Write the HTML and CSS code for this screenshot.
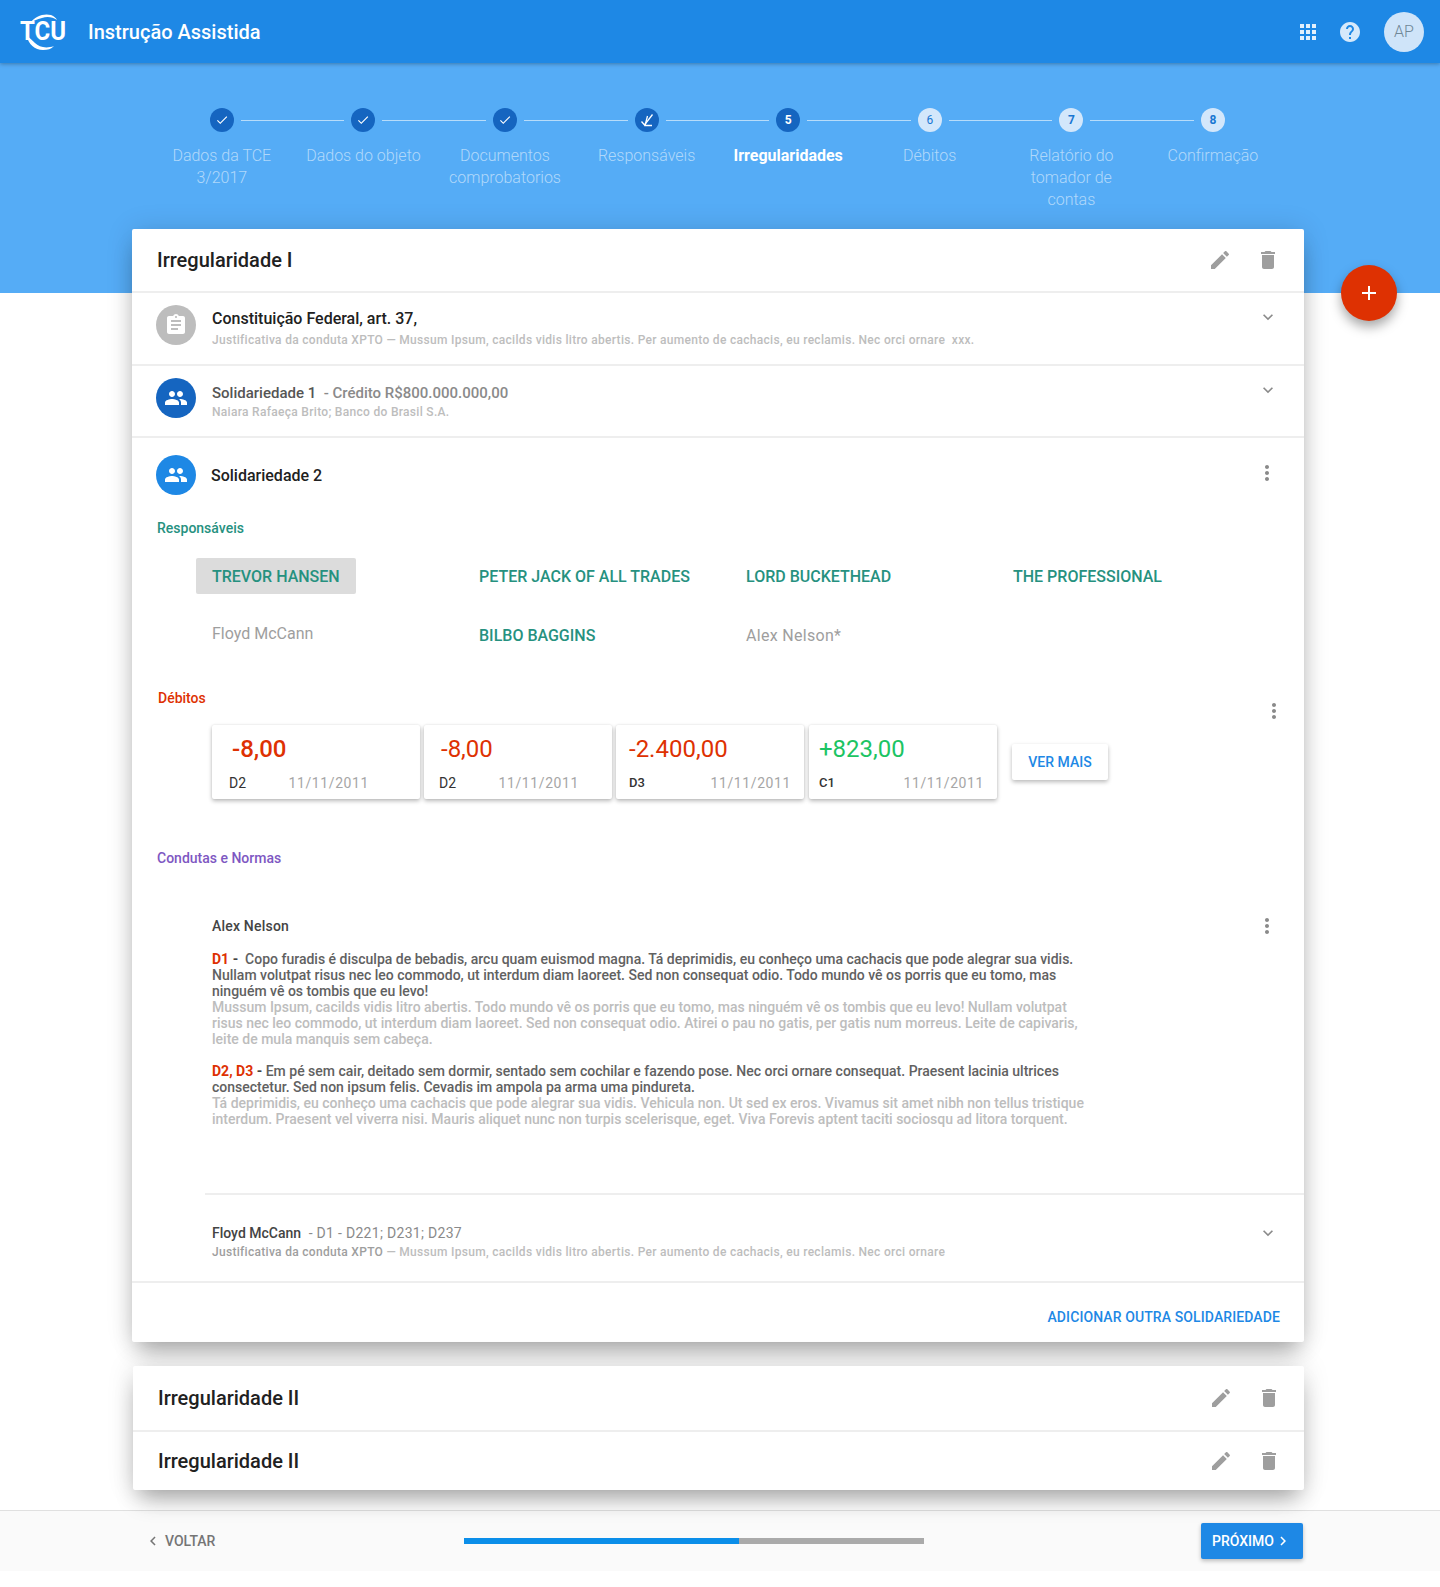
FILE: index.html
```html
<!DOCTYPE html>
<html lang="pt-BR">
<head>
<meta charset="utf-8">
<title>Instrução Assistida</title>
<link rel="stylesheet" href="styles.css">
</head>
<body>
<svg class="defs" width="0" height="0" aria-hidden="true">
  <symbol id="i-edit" viewBox="0 0 24 24"><path d="M3 17.25V21h3.75L17.81 9.94l-3.75-3.75L3 17.25zM20.71 7.04c.39-.39.39-1.02 0-1.41l-2.34-2.34c-.39-.39-1.02-.39-1.41 0l-1.83 1.83 3.75 3.75 1.83-1.83z"/></symbol>
  <symbol id="i-del" viewBox="0 0 24 24"><path d="M6 19c0 1.1.9 2 2 2h8c1.1 0 2-.9 2-2V7H6v12zM19 4h-3.5l-1-1h-5l-1 1H5v2h14V4z"/></symbol>
  <symbol id="i-down" viewBox="0 0 24 24"><path d="M16.59 8.59L12 13.17 7.41 8.59 6 10l6 6 6-6z"/></symbol>
  <symbol id="i-more" viewBox="0 0 24 24"><path d="M12 8c1.1 0 2-.9 2-2s-.9-2-2-2-2 .9-2 2 .9 2 2 2zm0 2c-1.1 0-2 .9-2 2s.9 2 2 2 2-.9 2-2-.9-2-2-2zm0 6c-1.1 0-2 .9-2 2s.9 2 2 2 2-.9 2-2-.9-2-2-2z"/></symbol>
  <symbol id="i-group" viewBox="0 0 24 24"><path d="M16 11c1.66 0 2.99-1.34 2.99-3S17.66 5 16 5c-1.66 0-3 1.34-3 3s1.34 3 3 3zm-8 0c1.66 0 2.99-1.34 2.99-3S9.66 5 8 5C6.34 5 5 6.34 5 8s1.34 3 3 3zm0 2c-2.33 0-7 1.17-7 3.5V19h14v-2.5c0-2.33-4.67-3.5-7-3.5zm8 0c-.29 0-.62.02-.97.05 1.16.84 1.97 1.97 1.97 3.45V19h6v-2.5c0-2.33-4.67-3.5-7-3.5z"/></symbol>
  <symbol id="i-assign" viewBox="0 0 24 24"><path d="M19 3h-4.18C14.4 1.84 13.3 1 12 1c-1.3 0-2.4.84-2.82 2H5c-1.1 0-2 .9-2 2v14c0 1.1.9 2 2 2h14c1.1 0 2-.9 2-2V5c0-1.1-.9-2-2-2zm-7 0c.55 0 1 .45 1 1s-.45 1-1 1-1-.45-1-1 .45-1 1-1zm2 14H7v-2h7v2zm3-4H7v-2h10v2zm0-4H7V7h10v2z"/></symbol>
  <symbol id="i-check" viewBox="0 0 24 24"><path d="M9 16.17L4.83 12l-1.42 1.41L9 19 21 7l-1.41-1.41z"/></symbol>
  <symbol id="i-left" viewBox="0 0 24 24"><path d="M15.41 7.41L14 6l-6 6 6 6 1.41-1.41L10.83 12z"/></symbol>
  <symbol id="i-right" viewBox="0 0 24 24"><path d="M10 6L8.59 7.41 13.17 12l-4.58 4.59L10 18l6-6z"/></symbol>
</svg>

<header class="topbar">
  <svg class="logo" viewBox="0 0 46 38" aria-label="TCU">
    <path class="logo-swoosh" d="M10 10C15 3 24 0 31 2c3 1 5 3 6 5-4-3-10-4-15-2-5 1-9 3-12 5z"/>
    <path class="logo-swoosh" d="M7 23c1 8 8 14 16 14 5 0 8-1 11-4-8 3-15 1-19-3-3-3-5-5-8-7z"/>
    <text class="logo-text" x="0" y="27" textLength="46" lengthAdjust="spacingAndGlyphs">TCU</text>
  </svg>
  <div class="app-title">Instrução Assistida</div>
  <div class="topbar-actions">
    <svg class="apps" viewBox="0 0 16 16"><path d="M0 0h4v4H0zM6 0h4v4H6zM12 0h4v4h-4zM0 6h4v4H0zM6 6h4v4H6zM12 6h4v4h-4zM0 12h4v4H0zM6 12h4v4H6zM12 12h4v4h-4z"/></svg>
    <svg class="help" viewBox="0 0 24 24"><path d="M12 2C6.48 2 2 6.48 2 12s4.48 10 10 10 10-4.48 10-10S17.52 2 12 2zm1 17h-2v-2h2v2zm2.07-7.75l-.9.92C13.45 12.9 13 13.5 13 15h-2v-.5c0-1.1.45-2.1 1.17-2.83l1.24-1.26c.37-.36.59-.86.59-1.41 0-1.1-.9-2-2-2s-2 .9-2 2H8c0-2.21 1.79-4 4-4s4 1.79 4 4c0 .88-.36 1.68-.93 2.25z"/></svg>
    <div class="avatar">AP</div>
  </div>
</header>

<section class="hero">
  <ol class="stepper">
    <li class="step">
      <div class="step-head"><span class="seg seg-none"></span><span class="dot dot-done"><svg class="ic12"><use href="#i-check"/></svg></span><span class="seg"></span></div>
      <div class="step-label">Dados da TCE 3/2017</div>
    </li>
    <li class="step">
      <div class="step-head"><span class="seg"></span><span class="dot dot-done"><svg class="ic12"><use href="#i-check"/></svg></span><span class="seg"></span></div>
      <div class="step-label">Dados do objeto</div>
    </li>
    <li class="step">
      <div class="step-head"><span class="seg"></span><span class="dot dot-done"><svg class="ic12"><use href="#i-check"/></svg></span><span class="seg"></span></div>
      <div class="step-label">Documentos comprobatorios</div>
    </li>
    <li class="step">
      <div class="step-head"><span class="seg"></span><span class="dot dot-done"><svg class="ic12" viewBox="0 0 14 14"><path class="mix-check" d="M1.5 8.5L4.5 12 12.5 1.5"/><path class="mix-check" d="M7.5 3L5 12.5h7"/></svg></span><span class="seg"></span></div>
      <div class="step-label">Responsáveis</div>
    </li>
    <li class="step">
      <div class="step-head"><span class="seg"></span><span class="dot dot-done">5</span><span class="seg"></span></div>
      <div class="step-label step-label-on">Irregularidades</div>
    </li>
    <li class="step">
      <div class="step-head"><span class="seg"></span><span class="dot dot-todo dot-thin">6</span><span class="seg"></span></div>
      <div class="step-label">Débitos</div>
    </li>
    <li class="step">
      <div class="step-head"><span class="seg"></span><span class="dot dot-todo">7</span><span class="seg"></span></div>
      <div class="step-label">Relatório do tomador de contas</div>
    </li>
    <li class="step">
      <div class="step-head"><span class="seg"></span><span class="dot dot-todo">8</span><span class="seg seg-none"></span></div>
      <div class="step-label">Confirmação</div>
    </li>
  </ol>
</section>

<button class="fab" aria-label="Adicionar"><svg class="fab-plus" viewBox="0 0 16 16"><path d="M7 1h2v6h6v2H9v6H7V9H1V7h6z"/></svg></button>

<main class="content">
  <article class="card card-main">
    <div class="card-head">
      <h2 class="card-title">Irregularidade I</h2>
      <svg class="ic24 tool"><use href="#i-edit"/></svg>
      <svg class="ic24 tool"><use href="#i-del"/></svg>
    </div>

    <div class="row row-a">
      <span class="badge badge-grey"><svg class="ic24"><use href="#i-assign"/></svg></span>
      <div class="row-text row-text-a">
        <div class="row-title">Constituição Federal, art. 37,</div>
        <div class="row-sub row-sub-a">Justificativa da conduta XPTO — Mussum Ipsum, cacilds vidis litro abertis. Per aumento de cachacis, eu reclamis. Nec orci ornare &nbsp;xxx.</div>
      </div>
      <svg class="ic20 chevron"><use href="#i-down"/></svg>
    </div>

    <div class="row row-b">
      <span class="badge badge-dark"><svg class="ic24"><use href="#i-group"/></svg></span>
      <div class="row-text row-text-b">
        <div class="row-title row-title-muted"><span class="title-strong">Solidariedade 1</span>&nbsp; - Crédito R$800.000.000,00</div>
        <div class="row-sub">Naiara Rafaeça Brito; Banco do Brasil S.A.</div>
      </div>
      <svg class="ic20 chevron"><use href="#i-down"/></svg>
    </div>

    <section class="open">
      <div class="open-head">
        <span class="badge badge-blue"><svg class="ic24"><use href="#i-group"/></svg></span>
        <div class="open-title">Solidariedade 2</div>
        <svg class="ic24 kebab"><use href="#i-more"/></svg>
      </div>

      <div class="label label-green">Responsáveis</div>
      <div class="people">
        <div class="person person-on">TREVOR HANSEN</div>
        <div class="person">PETER JACK OF ALL TRADES</div>
        <div class="person">LORD BUCKETHEAD</div>
        <div class="person">THE PROFESSIONAL</div>
        <div class="person person-off person-up">Floyd McCann</div>
        <div class="person">BILBO BAGGINS</div>
        <div class="person person-off person-spaced">Alex Nelson*</div>
      </div>

      <div class="debit-head">
        <div class="label label-red">Débitos</div>
        <svg class="ic24 kebab-b"><use href="#i-more"/></svg>
      </div>
      <div class="debits">
        <div class="debit debit-1">
          <div class="amount amount-strong">-8,00</div>
          <div class="debit-foot"><span class="code">D2</span><span class="date">11/11/2011</span></div>
        </div>
        <div class="debit debit-2">
          <div class="amount">-8,00</div>
          <div class="debit-foot"><span class="code">D2</span><span class="date">11/11/2011</span></div>
        </div>
        <div class="debit debit-3">
          <div class="amount">-2.400,00</div>
          <div class="debit-foot"><span class="code code-strong">D3</span><span class="date">11/11/2011</span></div>
        </div>
        <div class="debit debit-4">
          <div class="amount amount-plus">+823,00</div>
          <div class="debit-foot"><span class="code code-strong">C1</span><span class="date">11/11/2011</span></div>
        </div>
        <button class="ver-mais">VER MAIS</button>
      </div>

      <div class="label label-purple">Condutas e Normas</div>
      <div class="conduct-head">
        <div class="conduct-name">Alex Nelson</div>
        <svg class="ic24 kebab"><use href="#i-more"/></svg>
      </div>
      <div class="conduct-body">
        <p class="para"><b class="ref">D1 </b><b class="dash">-</b>&nbsp; Copo furadis é disculpa de bebadis, arcu quam euismod magna. Tá deprimidis, eu conheço uma cachacis que pode alegrar sua vidis.<br>Nullam volutpat risus nec leo commodo, ut interdum diam laoreet. Sed non consequat odio. Todo mundo vê os porris que eu tomo, mas<br>ninguém vê os tombis que eu levo!<br><span class="faint">Mussum Ipsum, cacilds vidis litro abertis. Todo mundo vê os porris que eu tomo, mas ninguém vê os tombis que eu levo! Nullam volutpat<br>risus nec leo commodo, ut interdum diam laoreet. Sed non consequat odio. Atirei o pau no gatis, per gatis num morreus. Leite de capivaris,<br>leite de mula manquis sem cabeça.</span></p>
        <p class="para"><b class="ref">D2, D3 </b><b class="dash">-</b> Em pé sem cair, deitado sem dormir, sentado sem cochilar e fazendo pose. Nec orci ornare consequat. Praesent lacinia ultrices<br>consectetur. Sed non ipsum felis. Cevadis im ampola pa arma uma pindureta.<br><span class="faint">Tá deprimidis, eu conheço uma cachacis que pode alegrar sua vidis. Vehicula non. Ut sed ex eros. Vivamus sit amet nibh non tellus tristique<br>interdum. Praesent vel viverra nisi. Mauris aliquet nunc non turpis scelerisque, eget. Viva Forevis aptent taciti sociosqu ad litora torquent.</span></p>
      </div>

      <div class="conduct-row">
        <div class="conduct-text">
          <div class="conduct-title"><span class="conduct-title-name">Floyd McCann</span>&nbsp; - D1 - D221; D231; D237</div>
          <div class="row-sub"><span class="sub-dark">Justificativa da conduta XPTO</span> — Mussum Ipsum, cacilds vidis litro abertis. Per aumento de cachacis, eu reclamis. Nec orci ornare</div>
        </div>
        <svg class="ic20 chevron-c"><use href="#i-down"/></svg>
      </div>
    </section>

    <div class="card-actions"><a class="add-link">ADICIONAR OUTRA SOLIDARIEDADE</a></div>
  </article>

  <div class="card card-list">
    <div class="card-head card-head-b">
      <h2 class="card-title">Irregularidade II</h2>
      <svg class="ic24 tool"><use href="#i-edit"/></svg>
      <svg class="ic24 tool"><use href="#i-del"/></svg>
    </div>
    <div class="card-head card-head-c">
      <h2 class="card-title">Irregularidade II</h2>
      <svg class="ic24 tool"><use href="#i-edit"/></svg>
      <svg class="ic24 tool"><use href="#i-del"/></svg>
    </div>
  </div>
</main>

<footer class="footer">
  <a class="back"><svg class="ic18"><use href="#i-left"/></svg>VOLTAR</a>
  <div class="progress"><div class="progress-fill"></div></div>
  <button class="next">PRÓXIMO<svg class="ic18"><use href="#i-right"/></svg></button>
</footer>
</body>
</html>
```
FILE: styles.css
```css
* { box-sizing: border-box; }
html, body { margin: 0; padding: 0; }
body {
  position: relative;
  width: 1440px;
  height: 1587px;
  overflow: hidden;
  background: #fff;
  font-family: Roboto, "Liberation Sans", sans-serif;
  color: #212121;
}
.defs { position: absolute; }
svg { fill: currentColor; display: block; flex: none; }
.ic12 { width: 14px; height: 14px; }
.ic18 { width: 18px; height: 18px; }
.ic20 { width: 20px; height: 20px; }
.ic24 { width: 24px; height: 24px; }

/* top bar */
.topbar {
  position: relative;
  z-index: 2;
  display: flex;
  align-items: center;
  height: 63px;
  padding-left: 20px;
  background: #1e88e5;
  color: #fff;
  box-shadow: 0 1px 4px rgba(0, 0, 0, .3);
}
.logo { width: 46px; height: 38px; margin-top: 0; }
.logo-swoosh { fill: #fff; }
.logo-text { font: 700 26px Roboto, sans-serif; fill: #fff; }
.app-title { margin-left: 22px; font-size: 20px; font-weight: 500; }
.topbar-actions { display: flex; align-items: center; margin-left: auto; padding-right: 16px; }
.apps { width: 16px; height: 16px; fill: #e3f0fc; }
.help { width: 24px; height: 24px; margin-left: 22px; fill: #d6e9fb; }
.avatar {
  display: flex;
  align-items: center;
  justify-content: center;
  width: 40px;
  height: 40px;
  margin-left: 22px;
  border-radius: 50%;
  background: #cfe4f9;
  color: #6f8797;
  font-size: 16px;
  font-weight: 300;
}

/* stepper */
.hero { height: 230px; padding-top: 45px; background: #55acf6; }
.stepper { display: flex; margin: 0 0 0 151px; padding: 0; list-style: none; }
.step { display: flex; flex-direction: column; align-items: center; width: 141.6px; }
.step-head { display: flex; align-items: center; width: 100%; height: 24px; }
.seg { flex: 1; height: 1px; background: #b7dcfa; }
.seg-none { background: transparent; }
.dot {
  display: flex;
  align-items: center;
  justify-content: center;
  width: 24px;
  height: 24px;
  margin: 0 7px;
  border-radius: 50%;
  font-size: 12px;
  font-weight: 700;
}
.dot-done { background: #1565c0; color: #fff; }
.dot-todo { background: #d3e7fb; color: #1976d2; }
.dot-thin { font-weight: 400; }
.mix-check { fill: none; stroke: #fff; stroke-width: 1.3; }
.step-label {
  width: 122px;
  margin-top: 13px;
  color: rgba(255, 255, 255, .55);
  font-size: 16px;
  font-weight: 300;
  line-height: 22px;
  text-align: center;
}
.step-label-on { color: #fff; font-weight: 700; }

/* floating button */
.fab {
  position: absolute;
  z-index: 3;
  top: 265px;
  left: 1341px;
  display: flex;
  align-items: center;
  justify-content: center;
  width: 56px;
  height: 56px;
  padding: 0;
  border: 0;
  border-radius: 50%;
  background: #de3102;
  color: #fff;
  box-shadow: 0 6px 12px rgba(0, 0, 0, .35);
}
.fab-plus { width: 16px; height: 16px; }

/* cards */
.content { position: relative; z-index: 1; width: 1172px; margin: -64px 0 0 132px; }
.card { border-radius: 2px; background: #fff; box-shadow: 0 14px 22px -6px rgba(0, 0, 0, .32), 0 0 28px rgba(0, 0, 0, .12); }
.card-head {
  display: flex;
  align-items: center;
  gap: 24px;
  height: 64px;
  padding: 0 24px 0 25px;
  border-bottom: 2px solid #eee;
}
.card-title { flex: 1; margin: 0; color: #212121; font-size: 20px; font-weight: 500; }
.tool { color: #9e9e9e; }

.row { display: flex; align-items: flex-start; padding: 12px 24px 0; border-bottom: 2px solid #eee; }
.row-a { height: 73px; }
.row-b { height: 72px; }
.badge {
  display: flex;
  align-items: center;
  justify-content: center;
  width: 40px;
  height: 40px;
  border-radius: 50%;
  color: #fff;
  flex: none;
}
.badge-grey { background: #bdbdbd; }
.badge-dark { background: #1565c0; }
.badge-blue { background: #1e88e5; }
.row-text { flex: 1; margin-left: 16px; }
.row-text-a { margin-top: 4px; }
.row-text-b { margin-top: 5px; }
.row-title { font-size: 16px; font-weight: 500; line-height: 20px; color: #212121; }
.row-title-muted { font-size: 15px; color: #8a8a8a; }
.title-strong { color: #555; }
.row-sub { font-size: 12px; font-weight: 500; line-height: 18px; letter-spacing: .3px; color: #bdbdbd; }
.row-sub-a { margin-top: 2px; }
.sub-dark { color: #9e9e9e; }
.chevron { margin: 2px 2px 0 0; color: #8a8a8a; }

/* open section */
.open { border-bottom: 2px solid #eee; }
.open-head { display: flex; align-items: center; padding: 17px 25px 0 24px; }
.open-title { flex: 1; margin-left: 15px; font-size: 16px; font-weight: 500; color: #212121; }
.kebab { color: #8a8a8a; margin-top: -4px; }
.label { font-size: 14px; font-weight: 500; line-height: 16px; padding-left: 25px; }
.label-green { margin-top: 25px; color: #26917f; }
.label-red { flex: 1; padding-left: 26px; color: #de3102; }
.label-purple { margin-top: 51px; color: #7e57c2; }
.people {
  display: grid;
  grid-template-columns: repeat(4, 267px);
  grid-auto-rows: 36px;
  row-gap: 23px;
  margin: 22px 0 0 64px;
}
.person {
  justify-self: start;
  display: flex;
  align-items: center;
  height: 36px;
  padding: 0 16px;
  border-radius: 2px;
  color: #26917f;
  font-size: 16px;
  font-weight: 500;
}
.person-on { background: #dcdcdc; }
.person-off { color: #9e9e9e; font-weight: 400; }
.person-up { padding-bottom: 4px; }
.person-spaced { letter-spacing: .3px; }

.debit-head { display: flex; align-items: flex-start; margin-top: 37px; padding-right: 18px; height: 33px; }
.kebab-b { margin-top: 9px; color: #8a8a8a; }
.debits { display: flex; align-items: center; margin: 2px 0 0 80px; gap: 4px; }
.debit {
  display: flex;
  flex-direction: column;
  height: 74px;
  border-radius: 2px;
  background: #fff;
  box-shadow: 0 2px 4px rgba(0, 0, 0, .28), 0 0 2px rgba(0, 0, 0, .08);
}
.debit-1 { width: 208px; padding: 10px 51px 0 17px; }
.debit-2 { width: 188px; padding: 10px 33px 0 15px; }
.debit-3 { width: 188px; padding: 10px 13px 0 13px; }
.debit-4 { width: 188px; padding: 10px 13px 0 10px; margin-left: 1px; }
.amount { height: 28px; color: #de3102; font-size: 24px; line-height: 28px; }
.debit-1 .amount { padding-left: 3px; font-weight: 500; }
.debit-2 .amount { padding-left: 2px; }
.amount-plus { color: #1cc463; }
.debit-foot { display: flex; justify-content: space-between; align-items: center; margin-top: 12px; line-height: 16px; }
.code { font-size: 14px; color: #333; }
.code-strong { font-weight: 500; font-size: 13px; }
.date { font-size: 14px; letter-spacing: .6px; color: #a6a6a6; }
.ver-mais {
  width: 96px;
  height: 36px;
  margin-left: 11px;
  padding: 0;
  border: 0;
  border-radius: 2px;
  background: #fff;
  color: #1e88e5;
  font: 500 14px Roboto, sans-serif;
  box-shadow: 0 2px 4px rgba(0, 0, 0, .28);
}

.conduct-head { display: flex; align-items: center; margin-top: 48px; padding: 0 25px 0 80px; }
.conduct-name { flex: 1; font-size: 14px; font-weight: 500; color: #444; letter-spacing: .2px; }
.conduct-head .kebab { margin-top: 0; }
.conduct-body { margin: 13px 0 0 80px; width: 920px; }
.para { margin: 0 0 16px; font-size: 14px; font-weight: 500; line-height: 16px; color: #616161; white-space: nowrap; }
.ref { color: #de3102; font-weight: 700; }
.dash { color: #444; font-weight: 700; }
.faint { color: #bdbdbd; }

.conduct-row {
  display: flex;
  margin: 66px 0 0 73px;
  padding: 28px 24px 18px 7px;
  border-top: 2px solid #eee;
  height: 88px;
}
.conduct-text { flex: 1; }
.conduct-title { font-size: 14px; font-weight: 400; line-height: 20px; color: #8a8a8a; letter-spacing: .3px; }
.conduct-title-name { color: #444; font-weight: 500; letter-spacing: 0; }
.chevron-c { margin-right: 2px; color: #8a8a8a; }

.card-actions { display: flex; justify-content: flex-end; height: 59px; padding: 26px 24px 0 0; }
.add-link { color: #1e88e5; font-size: 14px; font-weight: 500; line-height: 16px; letter-spacing: .1px; }

.card-list { margin: 24px 0 0 1px; width: 1171px; }
.card-head-b { height: 66px; padding-left: 25px; padding-right: 23px; }
.card-head-c { height: 58px; padding-left: 25px; padding-right: 23px; border-bottom: 0; }

/* footer */
.footer {
  display: grid;
  grid-template-columns: 464px 460px 1fr;
  align-items: center;
  height: 61px;
  margin-top: 20px;
  border-top: 1px solid #e0e0e0;
  background: #fafafa;
}
.back { display: flex; align-items: center; gap: 3px; padding-left: 144px; color: #757575; font-size: 14px; font-weight: 500; }
.progress { height: 6px; background: #aaa; }
.progress-fill { width: 275px; height: 100%; background: #0b8ee9; }
.next {
  justify-self: end;
  display: flex;
  align-items: center;
  justify-content: center;
  width: 102px;
  height: 36px;
  margin-right: 137px;
  padding: 0;
  border: 0;
  border-radius: 2px;
  background: #1e88e5;
  color: #fff;
  font: 500 14px Roboto, sans-serif;
  box-shadow: 0 2px 4px rgba(0, 0, 0, .25);
}
```
